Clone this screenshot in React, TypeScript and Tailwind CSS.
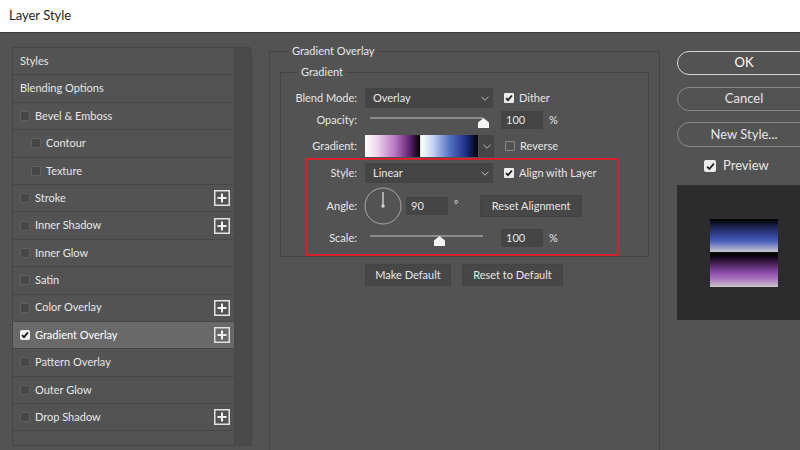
import React from "react";

const Plus: React.FC = () => (
  <svg width="16" height="16" viewBox="0 0 16 16" className="shrink-0">
    <rect x="0.75" y="0.75" width="14.5" height="14.5" fill="none" stroke="#e2e2e2" strokeWidth="1.5" />
    <path d="M8 3.5v9M3.5 8h9" stroke="#f2f2f2" strokeWidth="2" />
  </svg>
);

const ListCheck: React.FC<{ checked?: boolean }> = ({ checked }) =>
  checked ? (
    <span className="w-[10px] h-[10px] rounded-[2px] bg-[#f0f0f0] flex items-center justify-center shrink-0">
      <svg width="8" height="8" viewBox="0 0 8 8">
        <path d="M1 4.2l2 2L7 1.5" fill="none" stroke="#111" strokeWidth="1.8" />
      </svg>
    </span>
  ) : (
    <span className="block w-[10px] h-[10px] rounded-[2px] bg-[#464646] border border-[#606060] shrink-0" />
  );

const FormCheck: React.FC<{ checked?: boolean }> = ({ checked }) =>
  checked ? (
    <span className="w-[10px] h-[10px] rounded-[1px] bg-[#ececec] flex items-center justify-center shrink-0">
      <svg width="8" height="8" viewBox="0 0 8 8">
        <path d="M1 4.2l2 2L7 1.5" fill="none" stroke="#222" strokeWidth="1.8" />
      </svg>
    </span>
  ) : (
    <span className="block w-[10px] h-[10px] rounded-[1px] border border-[#8a8a8a] shrink-0" />
  );

const Chevron: React.FC = () => (
  <svg width="8" height="5" viewBox="0 0 8 5">
    <path d="M0.5 0.8L4 4.2 7.5 0.8" fill="none" stroke="#bdbdbd" strokeWidth="1" />
  </svg>
);

const Thumb: React.FC = () => (
  <svg width="11" height="10" viewBox="0 0 11 10">
    <path d="M5.5 0L11 4.5V10H0V4.5Z" fill="#f4f4f4" />
  </svg>
);

const Slider: React.FC<{ pos: number }> = ({ pos }) => (
  <div className="relative w-[128px] h-[18px]">
    <div className="absolute left-[5px] right-[10px] top-[6px] h-[2px] bg-[#8c8c8c]" />
    <div className="absolute top-[7px]" style={{ left: pos }}>
      <Thumb />
    </div>
  </div>
);

const Select: React.FC<{ value: string }> = ({ value }) => (
  <div className="w-[128px] h-[20px] bg-[#454545] flex items-center justify-between pl-[8px] pr-[4px]">
    <span>{value}</span>
    <Chevron />
  </div>
);

const Field: React.FC<{ value: string }> = ({ value }) => (
  <div className="w-[42px] h-[18px] bg-[#454545] flex items-center pl-[5px]">{value}</div>
);

const items = [
  { label: "Styles" },
  { label: "Blending Options" },
  { label: "Bevel & Emboss", box: true },
  { label: "Contour", box: true, indent: true },
  { label: "Texture", box: true, indent: true },
  { label: "Stroke", box: true, plus: true },
  { label: "Inner Shadow", box: true, plus: true },
  { label: "Inner Glow", box: true },
  { label: "Satin", box: true },
  { label: "Color Overlay", box: true, plus: true },
  { label: "Gradient Overlay", box: true, plus: true, on: true },
  { label: "Pattern Overlay", box: true },
  { label: "Outer Glow", box: true },
  { label: "Drop Shadow", box: true, plus: true },
];

export default function App() {
  return (
    <div className="w-[800px] h-[450px] overflow-hidden bg-[#535353] flex flex-col font-['Lato',sans-serif] text-[11px] text-[#e6e6e6]">
      {/* title bar */}
      <div className="h-[33px] shrink-0 bg-white border-b border-[#3c3c3c] flex items-center pl-[9px] text-[13px] text-[#1c1c1c]">
        Layer Style
      </div>

      <div className="flex flex-1">
        {/* style list */}
        <div className="ml-[12px] mt-[14px] h-[399px] w-[240px] shrink-0 flex border border-[#464646] rounded-tr-[3px]">
          <div className="w-[221px] flex flex-col">
            {items.map((it) => (
              <div
                key={it.label}
                className={`h-[27.4px] shrink-0 flex items-center pr-[4px] border-b border-[#464646] ${
                  it.on ? "bg-[#696969] text-white" : ""
                } ${it.indent ? "pl-[18px]" : "pl-[7px]"}`}
              >
                {it.box && <ListCheck checked={it.on} />}
                <span className={it.box ? "ml-[5px]" : ""}>{it.label}</span>
                {it.plus && (
                  <span className="ml-auto">
                    <Plus />
                  </span>
                )}
              </div>
            ))}
          </div>
          <div className="flex-1 bg-[#4a4a4a] border-l border-[#474747]" />
        </div>

        {/* gradient overlay panel */}
        <fieldset className="ml-[17px] mt-[10px] w-[391px] h-[420px] shrink-0 border border-[#444444]">
          <legend className="ml-[18px] px-[4px] leading-[16px]">Gradient Overlay</legend>

          <fieldset className="mx-[10px] mt-[5px] border border-[#444444]">
            <legend className="ml-[16px] px-[4px] leading-[16px]">Gradient</legend>

            <div className="mt-[8px] flex items-center h-[20px]">
              <span className="w-[76px] text-right">Blend Mode:</span>
              <div className="ml-[8px]">
                <Select value="Overlay" />
              </div>
              <span className="ml-[11px]">
                <FormCheck checked />
              </span>
              <span className="ml-[5px]">Dither</span>
            </div>

            <div className="mt-[3px] flex items-center h-[18px]">
              <span className="w-[76px] text-right">Opacity:</span>
              <div className="ml-[8px]">
                <Slider pos={113} />
              </div>
              <div className="ml-[8px]">
                <Field value="100" />
              </div>
              <span className="ml-[6px]">%</span>
            </div>

            <div className="mt-[6px] flex items-center h-[22px]">
              <span className="w-[76px] text-right">Gradient:</span>
              <div className="ml-[8px] flex h-[22px]">
                <div className="w-[55px] bg-[linear-gradient(to_right,#ffffff,#efd6ea_22%,#b774bf_55%,#5e1f6e_82%,#000000)]" />
                <div className="w-[1px] bg-[#dcdcdc]" />
                <div className="w-[57px] bg-[linear-gradient(to_right,#ffffff,#c9d5f2_20%,#5572c4_50%,#1b2a82_80%,#000000)]" />
                <div className="w-[15px] ml-[1px] bg-[#454545] flex items-center justify-center">
                  <Chevron />
                </div>
              </div>
              <span className="ml-[11px]">
                <FormCheck />
              </span>
              <span className="ml-[5px]">Reverse</span>
            </div>

            {/* highlighted group */}
            <div className="mt-[1px] ml-[25px] w-[313px] border-2 border-[#d3222c] pt-[3px] pb-[7px]">
              <div className="flex items-center h-[20px]">
                <span className="w-[49px] text-right">Style:</span>
                <div className="ml-[8px]">
                  <Select value="Linear" />
                </div>
                <span className="ml-[11px]">
                  <FormCheck checked />
                </span>
                <span className="ml-[5px]">Align with Layer</span>
              </div>

              <div className="mt-[4px] flex items-center h-[38px]">
                <span className="w-[49px] text-right">Angle:</span>
                <svg width="38" height="38" viewBox="0 0 38 38" className="ml-[7px] shrink-0">
                  <circle cx="19" cy="19" r="18" fill="none" stroke="#a8a8a8" strokeWidth="1" />
                  <path d="M19 19V5" stroke="#c8c8c8" strokeWidth="1.5" />
                  <circle cx="19" cy="19" r="1.8" fill="#d0d0d0" />
                </svg>
                <div className="ml-[4px]">
                  <Field value="90" />
                </div>
                <span className="ml-[6px] self-start mt-[10px] text-[10px]">°</span>
                <div className="ml-[22px] w-[102px] h-[22px] bg-[#474747] border border-[#434343] flex items-center justify-center">
                  Reset Alignment
                </div>
              </div>

              <div className="mt-[4px] flex items-center h-[18px]">
                <span className="w-[49px] text-right">Scale:</span>
                <div className="ml-[8px]">
                  <Slider pos={69} />
                </div>
                <div className="ml-[8px]">
                  <Field value="100" />
                </div>
                <span className="ml-[6px]">%</span>
              </div>
            </div>
          </fieldset>

          <div className="mt-[7px] ml-[95px] flex gap-[11px]">
            <div className="w-[86px] h-[22px] bg-[#474747] border border-[#434343] flex items-center justify-center">
              Make Default
            </div>
            <div className="w-[101px] h-[22px] bg-[#474747] border border-[#434343] flex items-center justify-center">
              Reset to Default
            </div>
          </div>
        </fieldset>

        {/* right column */}
        <div className="ml-[17px] w-[134px] shrink-0 flex flex-col text-[13px]">
          <div className="mt-[18px] h-[24px] rounded-full border-[1.5px] border-[#d6d6d6] flex items-center justify-center text-white">
            OK
          </div>
          <div className="mt-[12px] h-[24px] rounded-full border border-[#8a8a8a] flex items-center justify-center">
            Cancel
          </div>
          <div className="mt-[11px] h-[25px] rounded-full border border-[#8a8a8a] flex items-center justify-center">
            New Style...
          </div>
          <div className="mt-[13px] h-[12px] flex items-center pl-[27px]">
            <span className="w-[12px] h-[12px] rounded-[2px] bg-[#ececec] flex items-center justify-center">
              <svg width="9" height="9" viewBox="0 0 8 8">
                <path d="M1 4.2l2 2L7 1.5" fill="none" stroke="#222" strokeWidth="1.6" />
              </svg>
            </span>
            <span className="ml-[7px]">Preview</span>
          </div>
          <div className="mt-[13px] h-[135px] bg-[#2c2c2c] pt-[34px] pl-[33px]">
            <div className="w-[68px] flex flex-col">
              <div className="h-[33px] bg-[linear-gradient(to_bottom,#000000,#1a2148_22%,#3a4eb0_58%,#5a6cc0_72%,#cacacc)]" />
              <div className="h-[2px] bg-[#0c0c0c]" />
              <div className="h-[33px] bg-[linear-gradient(to_bottom,#000000,#35163f_22%,#8f4fae_58%,#a774bd_75%,#cbc5cd)]" />
            </div>
          </div>
        </div>
      </div>
    </div>
  );
}
